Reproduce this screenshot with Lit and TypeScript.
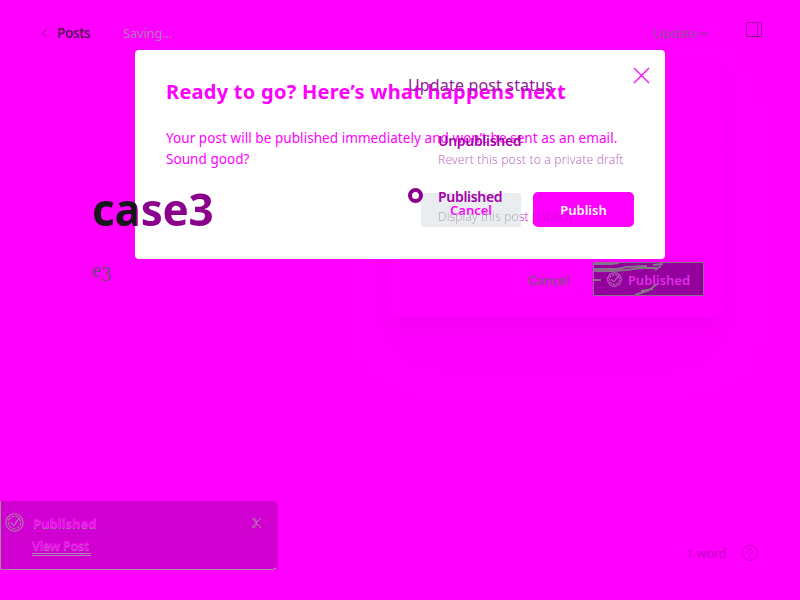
import { LitElement, html, css, svg } from "lit";
import { customElement } from "lit/decorators.js";

const checkBadge = svg`<circle cx="9" cy="9" r="8.2"/><circle cx="9" cy="9" r="5.9" stroke-dasharray="3 1"/><path d="M5.2 8.8l3 3.2L14 4.4"/>`;

@customElement("app-root")
export class AppRoot extends LitElement {
  static styles = css`
    :host { display: block; position: relative; width: 800px; height: 600px; overflow: hidden; background: #f0f;
      font-family: "Noto Sans", "Open Sans", sans-serif; font-size: 13px; color: #4a1a4a; }
    * { box-sizing: border-box; }
    div, span { white-space: nowrap; }
    svg { display: block; fill: none; flex: none; }
    .bar { display: flex; height: 66px; padding: 0 38px 0 42px; align-items: center; line-height: 20px; }
    .bar span { flex: none; }
    .posts { margin-left: 10px; width: 66px; font-size: 13.5px; font-weight: 500; letter-spacing: -.3px; color: #45104a; }
    .saving { color: #b278ba; width: 530px; font-size: 13px; letter-spacing: -.2px; }
    .update { color: #a046aa; font-size: 13px; font-weight: 500; margin-right: 3px; letter-spacing: -.2px; }
    .caret { margin-top: 2px; }
    .pane { margin: -8px 0 0 auto; }
    .modal { position: absolute; left: 135px; top: 50px; width: 530px; height: 209px; background: #fff; border-radius: 4px; padding: 26px 31px 32px; color: #f0f; display: flex; flex-direction: column; }
    .modal h1 { margin: 0; font-size: 20px; line-height: 31px; font-weight: 700; letter-spacing: .26px; }
    .modal .copy { margin-top: 21px; font-size: 13.5px; line-height: 21px; letter-spacing: .06px; }
    .x { position: absolute; left: 498px; top: 17px; }
    .actions { display: flex; gap: 12px; justify-content: flex-end; margin-top: auto; }
    .actions div { width: 101px; height: 35px; line-height: 36px; border-radius: 5px; text-align: center; font-weight: 600; font-size: 13px; }
    .actions .no { background: #e9edf0; width: 100px; height: 34px; line-height: 34px; margin-top: 1px; border-radius: 3px; }
    .actions .yes { background: #f0f; color: #fff; }
    .post { position: absolute; left: 92px; top: 180px; }
    .headline { font-size: 44px; line-height: 58px; font-weight: 700; letter-spacing: -.2px; color: transparent;
      background: linear-gradient(90deg, #15171a 44px, #8b008b 44px); -webkit-background-clip: text; background-clip: text; }
    .body { display: flex; font-family: "Liberation Serif", serif; font-size: 20.5px; line-height: 24px; margin-top: 20px; color: #6f4572; }
    .body .low { margin-top: 4px; }
    .shade { position: absolute; left: 388px; top: 50px; width: 336px; height: 268px; border-radius: 4px; box-shadow: 0 40px 60px -8px rgba(120,0,120,.05), 0 8px 16px rgba(120,0,120,.04), 0 1px 3px rgba(120,0,120,.05); }
    .pop { position: absolute; left: 388px; top: 50px; width: 336px; height: 268px; padding: 22px 20px; }
    .pop h2 { margin: 0; font-size: 16px; line-height: 26px; font-weight: 400; color: #8d2493; letter-spacing: .16px; }
    .opt { display: flex; margin-top: 33px; height: 46px; }
    .opt + .opt { margin-top: 10px; }
    .radio { width: 15px; height: 15px; margin: 1px 15px 0 0; }
    .opt .on { border: 4.5px solid #8b008b; border-radius: 50%; }
    .name { font-size: 14px; line-height: 20px; font-weight: 600; color: #a500aa; letter-spacing: -.3px; }
    .hint { font-size: 12px; line-height: 18px; font-weight: 300; color: #bc72c2; letter-spacing: .22px; }
    .hint.split { line-height: 20px; letter-spacing: .1px; color: transparent; background: linear-gradient(90deg, #b0a4b2 83px, #c60acb 83px); -webkit-background-clip: text; background-clip: text; }
    .foot { display: flex; gap: 9px; margin: 28px 0 0 105px; }
    .foot div { height: 35px; display: flex; align-items: center; justify-content: center; border-radius: 3px; font-weight: 600; font-size: 13px; }
    .foot .ghost { width: 71px; border: 1px solid #f800f9; color: #904593; padding-top: 2px; letter-spacing: -.1px; }
    .foot .done { position: relative; width: 111px; background: #93009b; border: 1px solid #85738a; color: #e02de8; gap: 6px; height: 34px; margin-top: 1px; border-radius: 1px; }
    .done .mark, .done span { z-index: 1; }
    .done span { padding-top: 2px; }
    .done .streaks { position: absolute; left: -1px; top: -1px; }
    .toast { position: absolute; left: 0; top: 501px; width: 278px; height: 69px; background: #d000d0; border-radius: 0 6px 6px 0; border-left: 1px solid #989098; border-bottom: 1px solid #a090a0; border-right: 1px solid #d100d1; padding: 12px 15px 0 4px; display: flex; gap: 9px; }
    .msg { flex: 1; color: #f60af6; font-weight: 700; text-shadow: 0 1px 0 #a875aa; line-height: 20px; }
    .link { font-size: 12.5px; font-weight: 600; line-height: 17px; width: 59px; margin: 4px 0 0 -1px; height: 19px; border-bottom: 3px double #b080b2; letter-spacing: -.22px; }
    .close { margin-top: 4px; }
    .count { position: absolute; left: 686px; top: 543px; display: flex; gap: 16px; line-height: 20px; color: #c500c8; letter-spacing: -.3px; }
  `;

  render() {
    return html`
      <div class="bar">
        <svg width="5" height="9" stroke="#7b257d"><path d="M4.5 .5L.8 4.5l3.7 4"/></svg>
        <span class="posts">Posts</span><span class="saving">Saving...</span>
        <span class="update">Update</span>
        <svg class="caret" width="8" height="6" stroke="#953a99" stroke-width="1.2"><path d="M.5 1L4 4.5 7.5 1"/></svg>
        <svg class="pane" width="16" height="15" stroke="#a400a4"><rect x=".5" y=".5" width="15" height="14" rx="1"/><path d="M11.5 1v13"/><path d="M1 14.5h14" stroke="#70206f"/></svg>
      </div>
      <div class="shade"></div>
      <div class="modal">
        <h1>Ready to go? Here’s what happens next</h1>
        <div class="copy">Your post will be published immediately and won’t be sent as an email.<br>Sound good?</div>
        <svg class="x" width="17" height="17" stroke="#f0f" stroke-width="1.2"><path d="M1 1l15 15M16 1L1 16"/></svg>
        <div class="actions"><div class="no">Cancel</div><div class="yes">Publish</div></div>
      </div>
      <div class="post"><div class="headline">case3</div><div class="body"><span>e</span><span class="low">3</span></div></div>
      <div class="pop">
        <h2>Update post status</h2>
        <div class="opt"><div class="radio"></div><div><div class="name">Unpublished</div><div class="hint">Revert this post to a private draft</div></div></div>
        <div class="opt"><div class="radio on"></div><div><div class="name">Published</div><div class="hint split">Display this post publicly</div></div></div>
        <div class="foot">
          <div class="ghost">Cancel</div>
          <div class="done">
            <svg class="streaks" width="110" height="34" stroke="#85738a" stroke-width="2"><path d="M0 2h18l8-1M0 7h24l10-2 20-1M0 9h20l14-1 14-2h16M0 18h8M60 3l10-1M62 8l6-4M42 33l14-5 8-6M48 29l12-2"/></svg>
            <svg class="mark" width="15" height="15" viewBox="0 0 18 18" stroke="#b866bd" stroke-width="1.3">${checkBadge}</svg><span>Published</span>
          </div>
        </div>
      </div>
      <div class="toast">
        <svg width="19" height="19" viewBox="0 0 18 18" stroke="#ac83ac">${checkBadge}</svg>
        <div class="msg">Published<div class="link">View Post</div></div>
        <svg class="close" width="11" height="12" stroke="#ac83ac"><path d="M1 1l9 10M3 1l3 4 4-4M9 2L1 10l2 1 3-4"/></svg>
      </div>
      <div class="count"><span>1 word</span><svg width="16" height="20" stroke="currentColor"><circle cx="8" cy="10" r="7.5"/><path d="M5.8 8.4a2.3 2.3 0 1 1 3.5 2q-1.3.7-1.3 1.8M8 13.5v1"/></svg></div>
    `;
  }
}
